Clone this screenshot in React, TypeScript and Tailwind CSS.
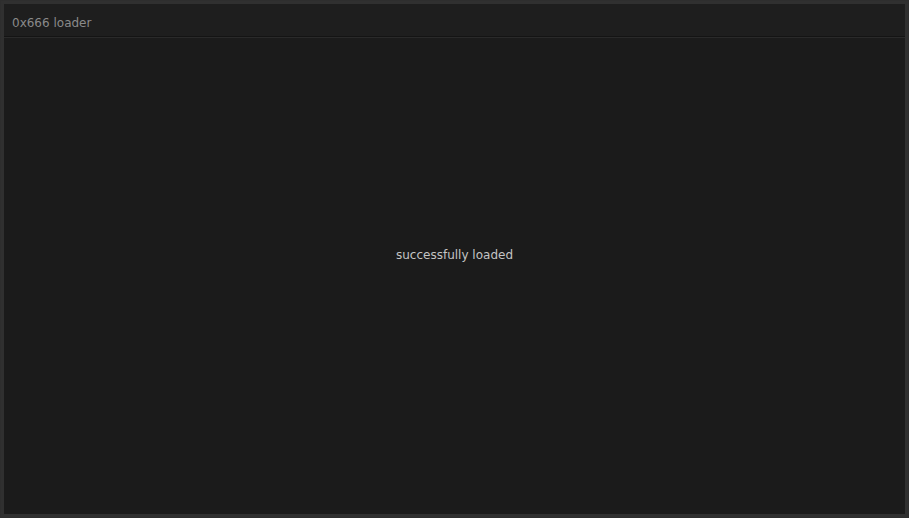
export default function App() {
  return (
    <div className="h-[518px] w-[909px] bg-[#2e2e2e] p-px font-['DejaVu_Sans',sans-serif]">
      <div className="flex h-full flex-col border-[3px] border-[#303030] bg-[#1b1b1b]">
        <div className="flex h-[33px] items-center border-b border-[#141414] bg-[#1e1e1e] px-2 pt-[5px]">
          <span className="text-[12px] text-[#8a8a8a]">0x666 loader</span>
        </div>
        <div className="h-px bg-[#2a2a2a]" />
        <div className="flex flex-1 items-center justify-center pb-[42px]">
          <span className="text-[12px] text-[#c4c4c4]">successfully loaded</span>
        </div>
      </div>
    </div>
  );
}
